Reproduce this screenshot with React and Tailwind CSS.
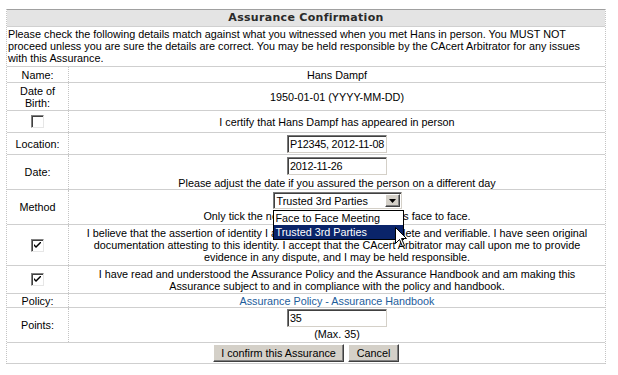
import React from 'react';

const Check = ({ checked }) => (
  <div className="relative h-[13px] w-[13px] border border-t-[#808080] border-l-[#808080] border-r-[#e6e6e6] border-b-[#e6e6e6] bg-white shadow-[inset_1px_1px_0_#404040]">
    {checked && (
      <svg className="absolute left-[2px] top-[2px]" width="7" height="7" viewBox="0 0 7 7">
        <path d="M0 2 L0 4 L2 6 L7 1 L7 -1 L2 4 Z" fill="#000" />
      </svg>
    )}
  </div>
);

const TextInput = ({ value }) => (
  <div className="flex h-[18px] w-[100px] items-center overflow-hidden whitespace-nowrap border border-t-[#7a7a7a] border-l-[#7a7a7a] border-r-[#d4d0c8] border-b-[#d4d0c8] bg-white pl-[2px] text-left tracking-[-0.2px] shadow-[inset_1px_1px_0_#404040]">
    {value}
  </div>
);

const Btn = ({ children, className = '' }) => (
  <div
    className={`flex h-[18px] items-center justify-center border border-t-white border-l-white border-r-[#404040] border-b-[#404040] bg-[#d4d0c8] shadow-[inset_-1px_-1px_0_#808080] ${className}`}
  >
    {children}
  </div>
);

const Row = ({ label, h, children, className = '' }) => (
  <div className={`flex border-b border-[#cfcfcf] ${h}`}>
    <div className="flex w-[62px] shrink-0 flex-col items-center justify-center border-r border-dotted border-[#c4c4c4] text-center">
      {label}
    </div>
    <div className={`flex flex-1 flex-col items-center justify-center text-center ${className}`}>{children}</div>
  </div>
);

export default function App() {
  return (
    <div className="relative h-[375px] w-[618px] overflow-hidden bg-white font-['Liberation_Sans',Arial,sans-serif] text-[10.8px] leading-[12px] text-black">
      <div className="pl-[6px] pt-[9px]">
        <div className="w-[600px] border-x border-dotted border-[#c4c4c4]">
          <div className="flex h-[18px] items-center justify-center border-t border-b border-t-[#a0a0a0] border-b-[#d0d0d0] bg-[#e4e4e4] font-['DejaVu_Sans',Verdana,sans-serif] text-[11px] font-bold tracking-[0.3px] text-[#2a2a2a]">
            Assurance Confirmation
          </div>
          <div className="h-[40px] whitespace-nowrap border-b border-[#cfcfcf] pl-[1px] pt-[1px]">
            Please check the following details match against what you witnessed when you met Hans in person. You MUST NOT
            <br />
            proceed unless you are sure the details are correct. You may be held responsible by the CAcert Arbitrator for any issues
            <br />
            with this Assurance.
          </div>
          <Row label="Name:" h="h-[16px]">Hans Dampf</Row>
          <Row
            label={
              <>
                Date of
                <br />
                Birth:
              </>
            }
            h="h-[28px]"
          >
            1950-01-01 (YYYY-MM-DD)
          </Row>
          <Row label={<Check />} h="h-[22px]">
            I certify that Hans Dampf has appeared in person
          </Row>
          <Row label="Location:" h="h-[22px]">
            <TextInput value="P12345, 2012-11-08" />
          </Row>
          <Row label="Date:" h="h-[35px]" className="!justify-start pt-[2px]">
            <TextInput value="2012-11-26" />
            <div className="mt-[2px]">Please adjust the date if you assured the person on a different day</div>
          </Row>
          <Row label="Method" h="h-[35px]" className="!justify-start pt-[2px]">
            <div className="relative">
              <div className="flex h-[17px] w-[129px] items-center border border-t-[#7a7a7a] border-l-[#7a7a7a] border-r-[#d4d0c8] border-b-[#d4d0c8] bg-white pl-[3px] text-left shadow-[inset_1px_1px_0_#404040]">
                Trusted 3rd Parties
                <div className="absolute right-[2px] top-[2px] flex h-[13px] w-[15px] items-center justify-center border border-t-white border-l-white border-r-[#404040] border-b-[#404040] bg-[#d4d0c8] shadow-[inset_-1px_-1px_0_#808080]">
                  <svg width="7" height="4" viewBox="0 0 7 4">
                    <path d="M0 0 H7 L3.5 4 Z" fill="#000" />
                  </svg>
                </div>
              </div>
              <div className="absolute left-0 top-[18px] z-10 w-[131px] border border-black bg-white text-left">
                <div className="h-[14px] pl-[2px] leading-[14px]">Face to Face Meeting</div>
                <div className="h-[14px] bg-[#0a246a] pl-[2px] leading-[14px] text-white">Trusted 3rd Parties</div>
              </div>
            </div>
            <div className="mt-[1px] whitespace-nowrap">Only tick the next box if the Assurance was face to face.</div>
          </Row>
          <Row label={<Check checked />} h="h-[41px]">
            <div className="whitespace-nowrap">
              I believe that the assertion of identity I am making is correct, complete and verifiable. I have seen original
              <br />
              documentation attesting to this identity. I accept that the CAcert Arbitrator may call upon me to provide
              <br />
              evidence in any dispute, and I may be held responsible.
            </div>
          </Row>
          <Row label={<Check checked />} h="h-[28px]">
            <div className="whitespace-nowrap">
              I have read and understood the Assurance Policy and the Assurance Handbook and am making this
              <br />
              Assurance subject to and in compliance with the policy and handbook.
            </div>
          </Row>
          <Row label="Policy:" h="h-[14px]">
            <div className="text-[#1d5d9b]">
              <a href="#">Assurance Policy</a> - <a href="#">Assurance Handbook</a>
            </div>
          </Row>
          <Row label="Points:" h="h-[35px]" className="!justify-start pt-[1px]">
            <TextInput value="35" />
            <div className="mt-[1px]">(Max. 35)</div>
          </Row>
          <div className="flex h-[21px] items-start justify-center gap-[4px] border-b border-[#cfcfcf] pt-[1px]">
            <Btn className="w-[131px]">I confirm this Assurance</Btn>
            <Btn className="w-[51px]">Cancel</Btn>
          </div>
        </div>
      </div>
      <svg className="absolute left-[395px] top-[227px] z-20" width="13" height="21" viewBox="0 0 13 21">
        <path d="M0.5 0.5 L0.5 16.5 L4.5 12.5 L7.5 19.5 L9.5 18.5 L6.5 11.5 L11.5 11.5 Z" fill="#fff" stroke="#000" strokeWidth="1" />
      </svg>
    </div>
  );
}
